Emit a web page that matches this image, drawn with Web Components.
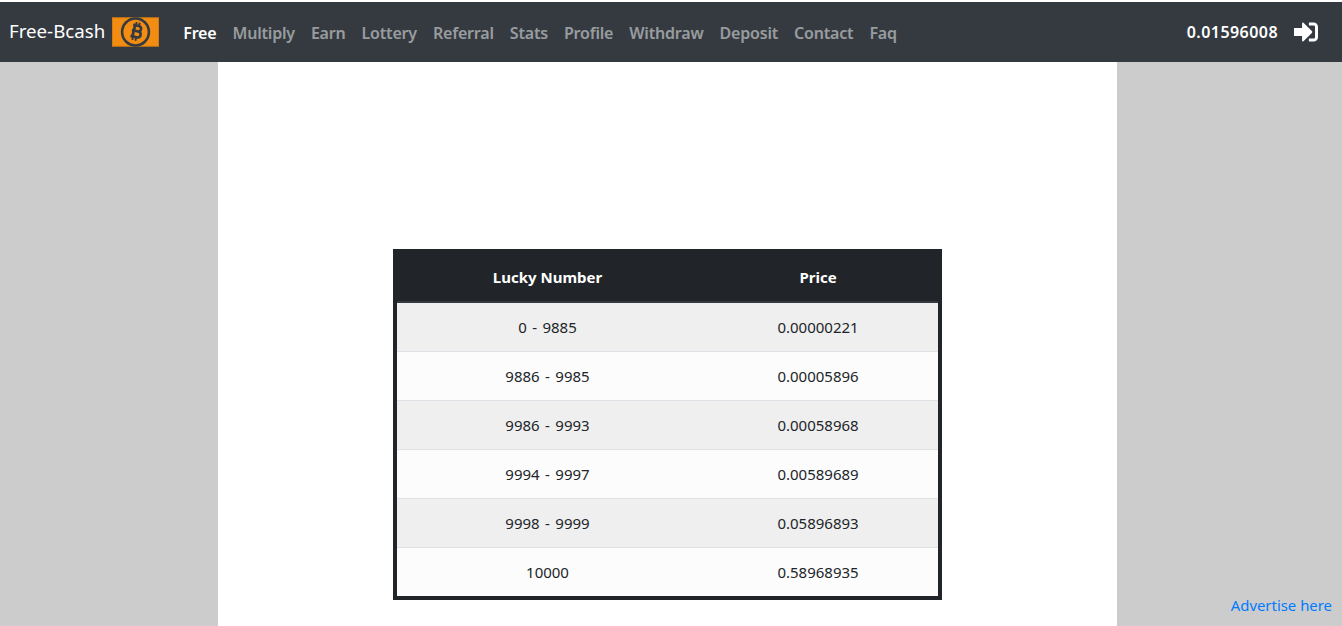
<!DOCTYPE html>
<html>
<head>
<meta charset="utf-8">
<title>Free-Bcash</title>
<style>
  html, body { margin: 0; height: 100%; overflow: hidden; }
  body { font-family: "Noto Sans", "Open Sans", sans-serif; background: #fff; }
</style>
</head>
<body>
<free-page>
  <top-nav balance="0.01596008"></top-nav>
  <price-table></price-table>
</free-page>

<script>
class TopNav extends HTMLElement {
  constructor() {
    super();
    this.links = ['Free', 'Multiply', 'Earn', 'Lottery', 'Referral', 'Stats', 'Profile', 'Withdraw', 'Deposit', 'Contact', 'Faq'];
    this.attachShadow({ mode: 'open' });
    this.render();
  }

  render() {
    const linkMarkup = this.links.map((name, i) => `<a class="${i === 0 ? 'active' : ''}">${name}</a>`).join('');
    this.shadowRoot.innerHTML = `
    <style>
      :host {
        display: flex;
        align-items: center;
        height: 60px;
        margin-top: 2px;
        padding: 0 24px 0 9px;
        background: #343a40;
        color: #fff;
      }
      .brand {
        display: flex;
        align-items: center;
        font-size: 18.7px;
        line-height: 30px;
        color: #fff;
        margin-right: 24px;
      }
      .name { margin-top: -3px; }
      .brand svg { margin-left: 7px; display: block; }
      nav { display: flex; gap: 16px; margin-top: 1px; font-size: 16px; font-weight: 600; letter-spacing: -0.19px; }
      a { color: rgba(255,255,255,.5); }
      a.active { color: #fff; }
      .balance { margin-left: auto; font-size: 16px; font-weight: 600; letter-spacing: 0.45px; }
      .signin { margin-left: 16px; display: block; }
    </style>
    <div class="brand"><span class="name">Free-Bcash</span>
      <svg width="47" height="30" viewBox="0 0 48 30">
        <rect x="0.5" y="0.5" width="47" height="29" fill="#f28c12" stroke="#d97f10"/>
        <circle cx="24" cy="15" r="15" fill="#343a40"/>
        <circle cx="24" cy="15" r="12.4" fill="#f28c12"/>
        <g transform="rotate(14 24 15)" fill="none" stroke="#343a40">
          <path d="M20 8.300h5.800c1.800 0 3 1.100 3 2.800s-1.200 2.800-3 2.800h-5.800M20 13.900h6.500c2 0 3.300 1.200 3.300 3s-1.300 3.100-3.300 3.100h-6.500" stroke-width="2.600"/>
          <path d="M22 7v14.400" stroke-width="2.800"/>
          <path d="M22.800 4.800v3M26 4.800v3M22.800 20.600v3M26 20.600v3" stroke-width="2"/>
        </g>
      </svg>
    </div>
    <nav>${linkMarkup}</nav>
    <span class="balance">0.01596008</span>
    <svg class="signin" width="24" height="20" viewBox="0 0 25 20" fill="#fff">
      <path d="M0 5.800h8.400V1.200c0-.9 1-1.300 1.700-.7L18.600 9c.5.5.5 1.400 0 2l-8.500 8.500c-.7.6-1.700.2-1.700-.7v-4.600H0z"/>
      <path d="M15.500 0h5a4.500 4.500 0 0 1 4.500 4.500v11a4.500 4.500 0 0 1-4.500 4.500h-5v-3.200h5a1.400 1.400 0 0 0 1.400-1.400V4.600a1.400 1.400 0 0 0-1.400-1.400h-5z"/>
    </svg>`;
  }
}

class PriceTable extends HTMLElement {
  constructor() {
    super();
    this.rows = [
      ['0 - 9885', '0.00000221'],
      ['9886 - 9985', '0.00005896'],
      ['9986 - 9993', '0.00058968'],
      ['9994 - 9997', '0.00589689'],
      ['9998 - 9999', '0.05896893'],
      ['10000', '0.58968935'],
    ];
    this.attachShadow({ mode: 'open' });
    this.render();
  }

  render() {
    const rowMarkup = this.rows.map((r) => `<tr><td>${r[0]}</td><td>${r[1]}</td></tr>`).join('');
    this.shadowRoot.innerHTML = `
    <style>
      :host { display: block; width: 549px; font-size: 15px; }
      table {
        width: 100%;
        border-collapse: separate;
        border-spacing: 0;
        border: 4px solid #212529;
        color: #212529;
        table-layout: fixed;
      }
      .first { width: 301px; }
      th {
        height: 48px;
        padding: 0;
        background: #212529;
        color: #fff;
        font-weight: 700;
        border-bottom: 2px solid #343a40;
      }
      td {
        height: 48px;
        padding: 0;
        text-align: center;
        word-spacing: 1.5px;
        border-bottom: 1px solid #dee2e6;
      }
      tr:last-child td { border-bottom: 0; }
      tr:nth-child(odd) td { background: #efefef; }
      tr:nth-child(even) td { background: #fcfcfc; }
    </style>
    <table>
      <colgroup><col class="first"><col></colgroup>
      <thead><tr><th>Lucky Number</th><th>Price</th></tr></thead>
      <tbody>${rowMarkup}</tbody>
    </table>`;
  }
}

class FreePage extends HTMLElement {
  constructor() {
    super();
    this.attachShadow({ mode: 'open' });
    this.shadowRoot.innerHTML = `
    <style>
      :host {
        display: grid;
        grid-template-rows: auto 1fr;
        grid-template-columns: 218px 899px 1fr;
        height: 100vh;
        background: #ccc;
      }
      .top { grid-column: 1 / -1; background: #fff; }
      .main {
        grid-column: 2;
        background: #fff;
        display: flex;
        justify-content: center;
        align-items: flex-start;
        padding-top: 187px;
        min-height: 0;
      }
      .right {
        grid-column: 3;
        display: flex;
        justify-content: flex-end;
        align-items: flex-end;
        padding: 0 10px 11px 0;
        white-space: nowrap;
        font-size: 14.9px;
        color: #007bff;
      }
    </style>
    <div class="top"><slot name="nav"></slot></div>
    <div class="main"><slot></slot></div>
    <div class="right">Advertise here</div>`;
  }
  connectedCallback() {
    this.querySelector('top-nav').slot = 'nav';
  }
}

customElements.define('top-nav', TopNav);
customElements.define('price-table', PriceTable);
customElements.define('free-page', FreePage);
</script>
</body>
</html>
